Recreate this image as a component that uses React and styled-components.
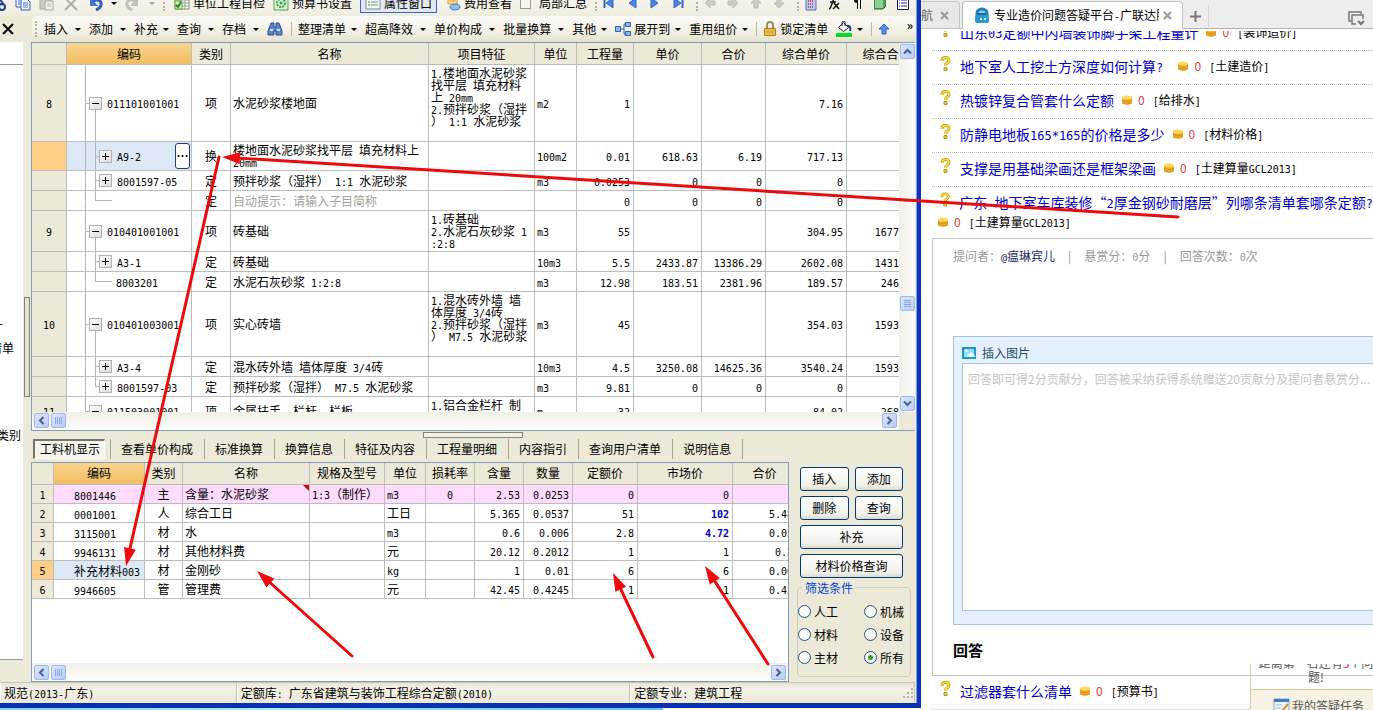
import React from "react";
import styled, { createGlobalStyle, css } from "styled-components";

const GlobalStyle = createGlobalStyle`
  * {
    box-sizing: border-box;
  }

  body {
    margin: 0;
    background: #fff;
    color: #000;
    font-family: "Noto Sans CJK SC", sans-serif;
    font-size: 12px;
    line-height: 12px;
    overflow: hidden;
  }

  button,
  input,
  textarea {
    font: inherit;
    color: inherit;
  }
`;

/* ---------- text ---------- */

const Latin = styled.span`
  font-family: "DejaVu Sans Mono", "Liberation Mono", monospace;
  font-size: ${(props) => props.$size}px;
  line-height: 0;
  white-space: pre;
`;

// half-width runs are set in a monospace face, half as wide as a CJK character
const Mixed = ({ text, size = 10 }) =>
  text.split(/([\x20-\x7e]+)/).map((part, i) =>
    i % 2 ? (
      <Latin key={i} $size={size}>
        {part}
      </Latin>
    ) : (
      part
    )
  );

/* ---------- page ---------- */

const Desktop = styled.div`
  position: relative;
  display: grid;
  grid-template-columns: minmax(0, 921fr) minmax(0, 452fr);
  height: 100vh;
  overflow: hidden;
`;

const LeftSide = styled.div`
  display: flex;
  flex-direction: column;
  min-height: 0;
`;

const TaskStrip = styled.div`
  flex: none;
  height: 2px;
  width: 72%;
  background: linear-gradient(90deg, #7fd4ee, #a6ecf8 40%, #5cc6ee);
`;

const AppWindow = styled.div`
  flex: 1;
  min-height: 0;
  display: flex;
  flex-direction: column;
  background: #ece9d8;
  border-right: 4px solid #0a35b8;
  border-bottom: 5px solid #0a31b4;
  box-shadow: inset -1px 0 0 #7fa3e8;
  padding-right: 2px;
`;

/* ---------- toolbars ---------- */

const TopBar = styled.div`
  flex: none;
  display: flex;
  align-items: flex-end;
  height: 16px;
  overflow: hidden;
  background: linear-gradient(#f6f4ea, #efecdf);
`;

const TopRow = styled.div`
  flex: none;
  display: flex;
  align-items: center;
  gap: 8px;
  height: 26px;
  white-space: nowrap;
`;

const TopGroups = styled.div`
  display: flex;
  gap: 12px;
`;

const IconGroup = styled.div`
  display: flex;
  align-items: center;
  gap: 11px;
  height: 16px;
  padding-left: 6px;
  border-left: 2px dotted #b5b19d;
`;

const Grip = styled.span`
  flex: none;
  width: 3px;
  height: 16px;
  border-left: 2px dotted #b5b19d;
`;

const BarGrip = styled(Grip)`
  margin-right: 6px;
`;

const TopButton = styled.button`
  display: flex;
  align-items: center;
  gap: 3px;
  padding: 0;
  border: 0;
  background: none;
  height: 20px;
  white-space: nowrap;

  ${(props) =>
    props.$active &&
    css`
      padding: 0 4px;
      border: 1px solid #316ac5;
      background: #e3e8f0;
    `}
`;

const CheckLabel = styled.label`
  display: flex;
  align-items: center;
  gap: 8px;

  input {
    appearance: none;
    width: 11px;
    height: 11px;
    margin: 0;
    border: 1px solid #9c9a8c;
    background: #f8f7f1;
  }
`;

const ToolRow = styled.div`
  flex: none;
  display: flex;
  height: 26px;
`;

const CloseSide = styled.button`
  flex: none;
  width: 32px;
  padding: 0 0 0 2px;
  border: 0;
  background: none;
  text-align: left;
`;

const ToolBar = styled.div`
  flex: 1;
  min-width: 0;
  display: flex;
  align-items: center;
  padding-left: 3px;
  background: linear-gradient(#fbfaf6, #f4f2e8 50%, #e6e2d0);
  border-radius: 4px 0 0 4px;
  overflow: hidden;
  white-space: nowrap;
`;

const ToolItem = styled.button`
  flex: none;
  display: flex;
  align-items: center;
  gap: ${(props) => (props.$tight ? 5 : 7)}px;
  padding: 0 8px 0 0;
  border: 0;
  background: none;
`;

const ToolLabel = styled.span`
  display: flex;
  align-items: center;
  gap: 3px;
`;

const Caret = styled.span`
  border: 3px solid transparent;
  border-bottom: 0;
  border-top-color: ${(props) => (props.$dim ? "#aaa" : "#000")};
`;

const ToolDivider = styled.span`
  flex: none;
  width: 1px;
  height: 14px;
  margin-right: 6px;
  background: #bdb9a6;
`;

const Chevron = styled.span`
  margin-left: auto;
  padding: 0 2px 8px 0;
  font-weight: bold;
`;

/* ---------- work area ---------- */

const Work = styled.div`
  flex: 1;
  min-height: 0;
  display: flex;
`;

const SideTree = styled.div`
  flex: none;
  width: 23px;
  display: flex;
  flex-direction: column;
  margin-bottom: 22px;
  background: #fff;
  border-bottom: 1px solid #9c9a8c;
  overflow: hidden;
`;

const SideHead = styled.div`
  height: 23px;
  border-bottom: 1px solid #9a9a94;
`;

const SideText = styled.div`
  display: flex;
  justify-content: flex-end;
  padding-right: ${(props) => props.$pad}px;
  margin-top: ${(props) => props.$top}px;
  white-space: nowrap;
`;

const SideSplit = styled.div`
  flex: none;
  width: 8px;
  display: flex;
  flex-direction: column;
  justify-content: center;
  align-items: center;
  padding-bottom: 30px;
`;

const SplitHandle = styled.div`
  width: 6px;
  height: 100px;
  border: 1px solid #86846f;
  background: #e4e1d0;
`;

const Panes = styled.div`
  flex: 1;
  min-width: 0;
  display: flex;
  flex-direction: column;
`;

const UpperPane = styled.div`
  flex: 388 1 0;
  min-height: 0;
  display: grid;
  grid-template-columns: minmax(0, 1fr) 16px;
  grid-template-rows: minmax(0, 1fr) 18px;
  border: 1px solid #7f9db9;
  border-right: 0;
  background: #fff;
`;

const LowerPane = styled.div`
  flex: 252 1 0;
  min-height: 0;
  display: flex;
  flex-direction: column;
`;

const TableClip = styled.div`
  overflow: hidden;
  min-height: 0;
`;

const Table = styled.table`
  table-layout: fixed;
  width: ${(props) => props.$width}px;
  border-collapse: separate;
  border-spacing: 0;
`;

const Th = styled.th`
  height: 22px;
  padding: 0;
  font-weight: normal;
  white-space: nowrap;
  overflow: hidden;
  background: ${(props) =>
    props.$hot ? "linear-gradient(#f9d48f, #f2bd62)" : "#ece9d8"};
  border-right: 1px solid #bdbdb4;
  border-bottom: 1px solid #bdbdb4;
`;

const Tr = styled.tr`
  height: ${(props) => props.$h}px;
  background: ${(props) => (props.$pink ? "#ffdcff" : "#fff")};
`;

const Td = styled.td`
  padding: 0 2px;
  overflow: hidden;
  white-space: nowrap;
  text-align: ${(props) => props.$align || "left"};
  vertical-align: ${(props) => (props.$top ? "top" : "middle")};
  border-right: 1px solid #bdbdbd;
  border-bottom: 1px solid #bdbdbd;
  ${(props) => props.$top && "padding-top: 2px;"}
  ${(props) => props.$align === "right" && "padding-right: 3px;"}
  ${(props) => props.$hint && "color: #a5a293;"}
  ${(props) => props.$strong && "color: #0000d0; font-weight: bold;"}
`;

const NoCell = styled(Td)`
  text-align: center;
  background: ${(props) => (props.$hot ? "#ffcf87" : "#ece9d8")};
`;

const CodeCell = styled(Td)`
  padding: ${(props) => (props.$plain ? "2px 0 0 20px" : "0")};
  ${(props) => props.$picked && "background: #dce8f5;"}
`;

const NameBox = styled.div`
  display: flex;
  justify-content: space-between;
`;

const NoteMark = styled.i`
  align-self: flex-start;
  margin: -3px -2px 0 0;
  border: 3px solid #e00000;
  border-left-color: transparent;
  border-bottom-color: transparent;
`;

/* tree column */

const TreeRow = styled.div`
  display: flex;
  align-items: center;
  height: ${(props) => props.$h - 1}px;
  padding-left: 18px;
`;

const Branch = styled.span`
  flex: none;
  align-self: stretch;
  width: ${(props) => props.$w}px;
  display: flex;
  flex-direction: column;
  ${(props) => props.$leaf && "margin-right: 4px;"}

  &::before,
  &::after {
    content: "";
    flex: 1;
    border-left: 1px solid #b4b4b4;
  }

  &::before {
    border-bottom: 1px solid ${(props) => (props.$arm ? "#b4b4b4" : "transparent")};
  }

  &::after {
    border-left-color: ${(props) => (props.$last ? "transparent" : "#b4b4b4")};
  }
`;

const ToggleCol = styled.span`
  flex: none;
  align-self: stretch;
  display: flex;
  flex-direction: column;
  align-items: center;
  width: 13px;
  margin-right: 5px;

  &::before,
  &::after {
    content: "";
    flex: 1;
  }

  &::after {
    border-left: 1px solid ${(props) => (props.$open ? "#b4b4b4" : "transparent")};
  }
`;

const Toggle = styled.button`
  width: 13px;
  height: 13px;
  padding: 0;
  display: flex;
  border: 1px solid #b0b0b0;
  background: linear-gradient(135deg, #fff, #dcdcdc);
`;

const MoreButton = styled.button`
  width: 15px;
  height: 26px;
  margin: 0 1px 0 auto;
  padding: 0;
  border: 1px solid #1d3f70;
  border-radius: 3px;
  background: #fdfdfb;
  font-weight: bold;
`;

/* scrollbars */

const Bar = styled.div`
  display: flex;
  flex-direction: ${(props) => (props.$vertical ? "column" : "row")};
  align-items: center;
  justify-content: space-between;
  padding: ${(props) => (props.$vertical ? "1px 0" : "0 2px")};
  background: linear-gradient(
    ${(props) => (props.$vertical ? "90deg" : "180deg")},
    #f1efe8,
    #fefefb
  );
`;

const BarStart = styled.div`
  display: flex;
  gap: 2px;
`;

const Track = styled.div`
  flex: 1;
  display: flex;
  flex-direction: column;

  &::before {
    content: "";
    flex: 236;
  }

  &::after {
    content: "";
    flex: 85;
  }
`;

const BarButton = styled.button`
  flex: none;
  display: flex;
  align-items: center;
  justify-content: center;
  width: 15px;
  height: 15px;
  padding: 0;
  border: 1px solid #9fb8ea;
  border-radius: 2px;
  background: linear-gradient(135deg, #dbe6fd, #b7cdf9);
`;

const Corner = styled.div`
  background: #ece9d8;
`;

/* ---------- lower pane ---------- */

const HandleRow = styled.div`
  flex: none;
  display: flex;
  justify-content: center;
  height: 7px;
  padding-top: 1px;
`;

const FlatHandle = styled.div`
  width: 100px;
  height: 6px;
  border: 1px solid #86846f;
  background: #f2f0e6;
`;

const Tabs = styled.div`
  flex: none;
  display: flex;
  align-items: center;
  height: 24px;
  padding: 0 0 2px 2px;
`;

const Tab = styled.button`
  height: 20px;
  padding: 0 11px 0 10px;
  border: 0;
  border-right: 1px solid #a9a695;
  background: none;
  white-space: nowrap;

  ${(props) =>
    props.$active &&
    css`
      padding: 0 4px 0 5px;
      margin-right: 5px;
      border: 1px solid #fff;
      border-top: 2px solid #77756a;
      border-left: 2px solid #77756a;
      background: #f6f4ec;
    `}
`;

const TabEdge = styled.span`
  width: 1px;
  height: 20px;
  background: #a9a695;
`;

const LowerRow = styled.div`
  flex: 1;
  min-height: 0;
  display: flex;
`;

const DetailGrid = styled.div`
  flex: 1;
  min-width: 0;
  display: flex;
  flex-direction: column;
  justify-content: space-between;
  border: 1px solid #7f9db9;
  background: #fff;
  overflow: hidden;
`;

const DetailBar = styled(Bar)`
  flex: none;
  height: 18px;
`;

const Actions = styled.div`
  flex: none;
  width: 126px;
  display: flex;
  flex-direction: column;
  padding: 5px 4px 5px 8px;
`;

const ButtonGrid = styled.div`
  display: grid;
  grid-template-columns: 1fr 1fr;
  gap: 5px 6px;
  padding: 0 8px 0 3px;
`;

const XpButton = styled.button`
  height: 24px;
  padding: 0;
  border: 1px solid #003c74;
  border-radius: 3px;
  background: linear-gradient(#fff, #f0f0ea 80%, #dcd8cc);
  ${(props) => props.$wide && "grid-column: span 2;"}
`;

const Filter = styled.fieldset`
  flex: 1;
  display: grid;
  grid-template-columns: 1fr 46px;
  align-content: center;
  margin: 4px 0 0;
  padding: 0;
  border: 1px solid #d0cfbf;
  border-radius: 4px;

  legend {
    margin-left: 4px;
    padding: 0 3px;
    color: #0046d5;
  }
`;

const Radio = styled.label`
  display: flex;
  align-items: center;
  gap: 3px;
  height: 23px;

  input {
    appearance: none;
    width: 13px;
    height: 13px;
    margin: 0;
    border: 1px solid #1d5281;
    border-radius: 50%;
    background: #fbfbf8;
  }

  input:checked {
    background: radial-gradient(circle, #2aa32a 2px, #fbfbf8 3px);
  }
`;

const StatusBar = styled.div`
  flex: none;
  display: grid;
  grid-template-columns: 237fr 394fr 285fr;
  height: 21px;
  border-top: 1px solid #c9c6b6;
  background: linear-gradient(#e8e5d6, #f3f1e8 30%, #ece9d8);
`;

const StatusItem = styled.div`
  display: flex;
  align-items: center;
  justify-content: space-between;
  padding-left: 3px;
  overflow: hidden;
  white-space: nowrap;
  border-left: 1px solid #fff;
  border-right: 1px solid #c3c0af;
`;

/* ---------- browser ---------- */

const Browser = styled.div`
  position: relative;
  display: flex;
  flex-direction: column;
  min-height: 0;
  background: #fff;
  overflow: hidden;
`;

const BrowserTabs = styled.div`
  flex: none;
  display: flex;
  align-items: flex-end;
  height: 29px;
  background: #ededed;
  box-shadow: inset 0 -1px 0 #b4b4b4;
  white-space: nowrap;
`;

const BrowserTab = styled.div`
  display: flex;
  align-items: center;
  justify-content: space-between;
  width: 39px;
  height: 28px;
  padding-right: 10px;
  border: 1px solid #c4c4c4;
  border-left: 0;
  border-radius: 0 4px 0 0;
  background: #e8e8e8;
  color: #666;
  overflow: hidden;

  ${(props) =>
    props.$active &&
    css`
      gap: 4px;
      width: 221px;
      margin-left: 2px;
      padding: 0 10px 0 11px;
      border-left: 1px solid #b4b4b4;
      border-bottom-color: #fff;
      border-radius: 4px 4px 0 0;
      background: #fff;
      color: #000;
    `}
`;

const TabTitle = styled.span`
  flex: 1;
  overflow: hidden;
`;

const PlainButton = styled.button`
  display: flex;
  padding: 0;
  border: 0;
  background: none;
`;

const NewTab = styled.div`
  display: flex;
  align-items: center;
  width: 26px;
  height: 22px;
  padding-left: 7px;
  margin-bottom: 2px;
  border-right: 1px solid #d6d6d6;
`;

const TabsMenu = styled.div`
  margin-left: auto;
  padding: 0 8px 2px 0;
`;

const Page = styled.div`
  flex: 1;
  min-height: 0;
  display: flex;
  flex-direction: column;
  padding-left: 11px;
`;

const ScrolledRow = styled.div`
  flex: none;
  display: flex;
  flex-direction: column;
  justify-content: flex-end;
  height: 20px;
  margin-top: 2px;
  overflow: hidden;
`;

const Question = styled.div`
  flex: none;
  display: flex;
  gap: 9px;
  height: ${(props) => (props.$open ? "auto" : "34px")};
  padding: 5px 0 0 8px;
  white-space: nowrap;
  ${(props) => !props.$open && "border-bottom: 1px dotted #b8b8b8;"}
`;

const QuestionLine = styled.div`
  display: flex;
  align-items: center;
  gap: 8px;
  height: 20px;
`;

const QuestionLink = styled.a`
  font-size: 14px;
  color: #0000cc;
  text-decoration: none;
`;

const Score = styled.span`
  display: flex;
  align-items: center;
  gap: 6px;
  color: #e04040;
`;

const ScoreRow = styled(QuestionLine)`
  flex: none;
  height: 26px;
  padding: 0 0 6px 6px;
  white-space: nowrap;
`;

const Card = styled.div`
  flex: 1;
  min-height: 0;
  display: flex;
  flex-direction: column;
  border: 1px solid #c3c6c8;
  border-right: 0;
  padding-left: 20px;
`;

const Meta = styled.div`
  display: flex;
  gap: 13px;
  margin: 11px 0 74px;
  color: #999;
  white-space: nowrap;

  a {
    color: #1e2a6b;
    text-decoration: none;
  }
`;

const Composer = styled.div`
  flex: 1;
  min-height: 0;
  display: flex;
  flex-direction: column;
  padding: 0 0 13px 8px;
  border: 1px solid #a9c4dd;
  border-right: 0;
  background: #e4f1fd;
`;

const InsertImage = styled.button`
  flex: none;
  display: flex;
  align-items: center;
  gap: 6px;
  height: 26px;
  padding: 6px 0 0;
  border: 0;
  background: none;
  color: #24495f;
`;

const Answer = styled.textarea`
  flex: 1;
  resize: none;
  padding: 9px 0 0 5px;
  border: 1px solid #a9c4dd;
  border-right: 0;
  background: #fff;
  outline: 0;
  white-space: nowrap;
  overflow: hidden;

  &::placeholder {
    color: #c4c4c4;
  }
`;

const CardTitle = styled.h2`
  flex: none;
  margin: 0;
  font-size: 15px;
  line-height: 50px;
`;

const Notice = styled.aside`
  position: absolute;
  right: 0;
  bottom: 0;
  width: 123px;
  height: 46px;
  overflow: hidden;
  display: flex;
  flex-direction: column;
  justify-content: flex-start;
  border-left: 1px solid #d8cda8;
  color: #555;
`;

const NoticeText = styled.div`
  flex: none;
  display: flex;
  flex-direction: column;
  justify-content: flex-end;
  align-items: center;
  height: 25px;
  padding: 0 0 5px 8px;
  line-height: 14px;
  white-space: nowrap;

  b {
    font-weight: normal;
    color: #e03030;
  }
`;

const NoticeTask = styled.div`
  flex: none;
  display: flex;
  align-items: flex-start;
  gap: 2px;
  height: 30px;
  padding: 8px 0 0 22px;
  border-top: 1px solid #d8c890;
  background: #f7f2e4;
  line-height: 16px;
  white-space: nowrap;
`;

const ArrowLayer = styled.svg`
  position: absolute;
  inset: 0;
  width: 100%;
  height: 100%;
  pointer-events: none;
`;

/* ---------- icons ---------- */

const Svg = ({ w = 16, h = 16, children }) => (
  <svg width={w} height={h} viewBox={`0 0 ${w} ${h}`} fill="none">
    {children}
  </svg>
);

const CutIcon = () => (
  <Svg w={7}>
    <circle cx="2" cy="12" r="3" stroke="#1f3f8f" strokeWidth="2" />
    <path d="M0 4l3 5" stroke="#1f3f8f" strokeWidth="2" />
  </Svg>
);

const CopyIcon = () => (
  <Svg>
    <path d="M1 1h8v11H1z" fill="#e8f1ff" stroke="#3c6cc4" />
    <path d="M6 4h6l3 3v8H6z" fill="#f4f8ff" stroke="#2c5cb8" />
    <path d="M8 8h5M8 10h5M8 12h5M3 5h2M3 7h2M3 9h2" stroke="#4c7cd0" />
  </Svg>
);

const PasteIcon = () => (
  <Svg>
    <path d="M1 2h11v12H1z" fill="#cfccbf" stroke="#aaa796" />
    <path d="M6 6h8v9H6z" fill="#f2f1ea" stroke="#aaa796" />
    <path d="M8 9h4M8 11h4" stroke="#bbb" />
  </Svg>
);

const DeleteIcon = () => (
  <Svg>
    <path d="M2 3l12 12M14 3L2 15" stroke="#b1aea2" strokeWidth="2" />
  </Svg>
);

const TurnIcon = ({ redo }) => (
  <Svg>
    <g transform={redo ? "translate(16 0) scale(-1 1)" : undefined}>
      <path d="M6 7c4-4 9-1 8 3-.5 3-3 4-5 5" stroke={redo ? "#c4c1b6" : "#2f62c8"} strokeWidth="3" />
      <path d="M3 2v9h8z" fill={redo ? "#c4c1b6" : "#3f74da"} />
    </g>
  </Svg>
);

const CheckSheetIcon = () => (
  <Svg>
    <path d="M1 1h14v13H1z" fill="#fff" stroke="#7c8c7c" />
    <path d="M1 5h14M1 8h14M1 11h14M6 1v13M11 1v13" stroke="#8ea08e" />
    <path d="M1 6h7v8H1z" fill="#d8f0b8" stroke="#6a9a3a" />
    <path d="M2 10l2 2 3-5" stroke="#1c8a1c" strokeWidth="2" />
  </Svg>
);

const GearSheetIcon = () => (
  <Svg>
    <path d="M1 1h14v14H1z" fill="#d8f2d0" stroke="#5aa05a" />
    <circle cx="8" cy="8" r="4" stroke="#3f9a50" strokeWidth="2" strokeDasharray="2 1" />
    <circle cx="8" cy="8" r="1.5" fill="#3f9a50" />
  </Svg>
);

const ListIcon = () => (
  <Svg>
    <path d="M1 1h14v13H1z" fill="#f4fbf4" stroke="#6f8f8f" />
    <path d="M3 4h2M3 7h2M3 10h2" stroke="#2f9a3f" />
    <path d="M6 4h7M6 7h7M6 10h7" stroke="#7a8a9a" />
  </Svg>
);

const CostIcon = () => (
  <Svg>
    <path d="M3 0h9v9H3z" fill="#fce6a8" stroke="#d99a30" />
    <path d="M4 3h7M4 6h7" stroke="#d99a30" />
    <ellipse cx="10" cy="12" rx="5" ry="3" fill="#8fc0f0" stroke="#3c74c0" />
  </Svg>
);

const NavIcon = ({ back, stop }) => (
  <Svg w={12}>
    <g transform={back ? "translate(12 0) scale(-1 1)" : undefined}>
      <path d="M2 3l7 5-7 5z" fill="#4a86e0" stroke="#2f66c8" />
      {stop && <path d="M10.500 3v10" stroke="#2f66c8" strokeWidth="2" />}
    </g>
  </Svg>
);

const MoveIcon = ({ turn }) => (
  <Svg w={12}>
    <path
      transform={`rotate(${turn} 6 8)`}
      d="M1 8l5-5v3h5v4H6v3z"
      fill="#cfccc2"
      stroke="#bdbab0"
    />
  </Svg>
);

const CalcIcon = () => (
  <Svg w={12}>
    <path d="M1 1h10v14H1z" fill="#b9cdf0" stroke="#5070b0" />
    <path d="M3 6h6M3 9h6M3 12h6" stroke="#d04060" strokeWidth="2" strokeDasharray="1 1" />
  </Svg>
);

const FxIcon = () => (
  <Svg w={12}>
    <path d="M1 14c3 0 3-11 7-12M2 7h6M6 8l5 6M11 8l-6 6" stroke="#111" strokeWidth="1.500" />
  </Svg>
);

const PilcrowIcon = () => (
  <Svg w={12}>
    <path d="M6 2h5M6.500 2v12M9.500 2v12" stroke="#111" />
    <path d="M6 2a3 3 0 0 0 0 6z" fill="#111" />
  </Svg>
);

const CubeIcon = () => (
  <Svg w={12}>
    <path d="M0 4l3-3h9v10l-3 3H0z" fill="#4fa05a" stroke="#2c6c38" />
    <path d="M1 5h8v8H1z" fill="#8ed094" />
  </Svg>
);

const LinesIcon = () => (
  <Svg w={12}>
    <path d="M.500 1.500h11v13H.500z" fill="#fff" stroke="#111a60" />
    <path d="M2 5h1M4 5h6M2 8h1M4 8h6M2 11h1M4 11h6" stroke="#1a2aa0" />
  </Svg>
);

const BinocularsIcon = () => (
  <Svg>
    <path d="M4 2h3v4h2V2h3l3 8v4H9v-4H7v4H1v-4z" fill="#5b86c8" stroke="#27508f" />
    <path d="M3 9h3M10 9h3" stroke="#d4e4fb" strokeWidth="2" />
  </Svg>
);

const ExpandIcon = () => (
  <Svg>
    <path d="M5 8h4M9 3v10M9 3h2M9 13h2" stroke="#2f5fb0" />
    <path d="M.500 5.500h5v5h-5zM10.500 1.500h5v4h-5zM10.500 10.500h5v4h-5z" fill="#8fb8ef" stroke="#2f5fb0" />
  </Svg>
);

const LockIcon = () => (
  <Svg w={14}>
    <path d="M4 7V4a3 3 0 0 1 6 0v3" stroke="#9a8a60" strokeWidth="2" />
    <path d="M1.500 7.500h11v7h-11z" fill="#f0c050" stroke="#b07c18" />
    <path d="M3 10h8M3 12h8" stroke="#d49c30" />
  </Svg>
);

const BucketIcon = () => (
  <Svg>
    <path d="M2.500 6.500l5-5 5 5-5 4z" fill="#f4f4f4" stroke="#111a30" />
    <path d="M6 5V1.500a1.500 1.500 0 0 1 3 0V5" stroke="#111a30" />
    <path d="M11 5c3-1 4 2 3 5" stroke="#1c3c90" strokeWidth="2" />
    <path d="M0 12h16v4H0z" fill="#00e020" />
  </Svg>
);

const UpIcon = () => (
  <Svg w={12}>
    <path d="M6 3l5 5H8v5H4V8H1z" fill="#5b8ee4" stroke="#2f62c0" />
  </Svg>
);

const CrossIcon = ({ size = 9, color = "#999" }) => (
  <Svg w={size} h={size}>
    <path d={`M1 1L${size - 1} ${size - 1}M${size - 1} 1L1 ${size - 1}`} stroke={color} strokeWidth="2" />
  </Svg>
);

const ChevronIcon = ({ turn = 0 }) => (
  <Svg w={9} h={9}>
    <path transform={`rotate(${turn} 4.500 4.500)`} d="M1 6.500l3.500-3.500L8 6.500" stroke="#4d6185" strokeWidth="2" />
  </Svg>
);

const ThumbIcon = ({ turn = 0 }) => (
  <Svg w={9} h={9}>
    <path transform={`rotate(${turn} 4.500 4.500)`} d="M1.500 1v7M3.500 1v7M5.500 1v7M7.500 1v7" stroke="#8aa8e8" />
  </Svg>
);

const ToggleIcon = ({ plus }) => (
  <Svg w={11} h={11}>
    <path d={plus ? "M2 5.500h7M5.500 2v7" : "M2 5.500h7"} stroke="#000" />
  </Svg>
);

const QuestionIcon = () => (
  <Svg w={11} h={15}>
    <path d="M2 5c0-4.500 7-4.500 7-.500 0 2.500-3.500 2.500-3.500 5" stroke="#b8981a" strokeWidth="3" />
    <path d="M2 5c0-4.500 7-4.500 7-.500 0 2.500-3.500 2.500-3.500 4.500" stroke="#fae030" strokeWidth="1.600" />
    <path d="M4 11.500h3v3H4z" fill="#f4c820" stroke="#b8981a" />
  </Svg>
);

const CoinIcon = () => (
  <Svg w={10} h={10}>
    <path d="M0 2.500v5C0 10 10 10 10 7.500v-5z" fill="#f2a818" />
    <ellipse cx="5" cy="2.500" rx="5" ry="2" fill="#fbdc60" />
    <path d="M0 5c1 2 9 2 10 0M0 7.500c1 2 9 2 10 0" stroke="#d89020" />
  </Svg>
);

const SiteIcon = () => (
  <Svg>
    <path d="M3 9V6a5 4 0 0 1 10 0v3" fill="#8fd0ec" stroke="#2480b8" strokeWidth="3" />
    <rect x="1" y="8" width="14" height="8" rx="2" fill="#2a9ad0" />
    <path d="M4 6h8v2H4z" fill="#1c6aa0" />
    <path d="M6 12h2M10 12h2" stroke="#c8ecfa" strokeWidth="2" />
  </Svg>
);

const PlusIcon = () => (
  <Svg w={11} h={11}>
    <path d="M5.500 0v11M0 5.500h11" stroke="#777" strokeWidth="2" />
  </Svg>
);

const TabsMenuIcon = () => (
  <Svg w={17} h={15}>
    <path d="M3 10H1V1h12v2M8 13H4V4h11v4" stroke="#777" strokeWidth="1.500" />
    <path d="M10 10l3 3 3-3" stroke="#777" strokeWidth="2" />
  </Svg>
);

const PictureIcon = () => (
  <Svg w={14} h={12}>
    <path d="M1 1h12v10H1z" fill="#8fe0f8" stroke="#1a98c8" strokeWidth="2" />
    <path d="M3 4h3M6 9l3-3 3 3z" stroke="#fff" strokeWidth="1.500" />
  </Svg>
);

const NoteIcon = () => (
  <Svg w={17} h={16}>
    <path d="M1 1h15v14H1z" fill="#eef5fc" stroke="#90a8c0" />
    <path d="M1 1h15v3H1z" fill="#3c7cc8" />
    <path d="M3 7h6M3 10h5" stroke="#a0b4c8" />
    <path d="M15 6l-6 7" stroke="#e09030" strokeWidth="2" />
  </Svg>
);

const GripIcon = () => (
  <Svg w={12} h={12}>
    <path
      d="M9 1h2v2H9zM5 5h2v2H5zM9 5h2v2H9zM1 9h2v2H1zM5 9h2v2H5zM9 9h2v2H9z"
      fill="#b8b4a2"
    />
  </Svg>
);

/* ---------- data ---------- */

const tools = [
  { label: "插入" },
  { label: "添加" },
  { label: "补充", tight: true },
  { label: "查询" },
  { label: "存档" },
];

const moreTools = [
  { label: "整理清单", tight: true },
  { label: "超高降效" },
  { label: "单价构成" },
  { label: "批量换算" },
  { label: "其他", tight: true },
  { label: "展开到", tight: true, icon: <ExpandIcon /> },
  { label: "重用组价", tight: true },
];

const mainWidths = [35, 125, 39, 198, 106, 42, 57, 68, 64, 81, 80];
const mainHeads = ["", "编码", "类别", "名称", "项目特征", "单位", "工程量", "单价", "合价", "综合单价", "综合合价"];

// level 0 is a list item, level 1 a quota below it
const mainRows = [
  {
    no: "8", h: 77, level: 0, code: "011101001001", kind: "项", name: ["水泥砂浆楼地面"],
    note: ["1.楼地面水泥砂浆", "找平层 填充材料", "上 20mm", "2.预拌砂浆（湿拌", "） 1:1 水泥砂浆"],
    unit: "m2", nums: ["1", "", "", "7.16", ""],
  },
  {
    h: 29, level: 1, code: "A9-2", kind: "换", name: ["楼地面水泥砂浆找平层 填充材料上", "20mm"],
    unit: "100m2", nums: ["0.01", "618.63", "6.19", "717.13", ""], picked: true,
  },
  { h: 20, level: 1, code: "8001597-05", kind: "定", name: ["预拌砂浆（湿拌） 1:1 水泥砂浆"], unit: "m3", nums: ["0.0253", "0", "0", "0", ""] },
  { h: 20, level: 1, leaf: true, last: true, code: "", kind: "定", name: ["自动提示：请输入子目简称"], hint: true, unit: "", nums: ["0", "0", "0", "0", ""] },
  {
    no: "9", h: 41, level: 0, code: "010401001001", kind: "项", name: ["砖基础"],
    note: ["1.砖基础", "2.水泥石灰砂浆 1", ":2:8"],
    unit: "m3", nums: ["55", "", "", "304.95", "16772.25"],
  },
  { h: 20, level: 1, code: "A3-1", kind: "定", name: ["砖基础"], unit: "10m3", nums: ["5.5", "2433.87", "13386.29", "2602.08", "14311.44"] },
  { h: 20, level: 1, leaf: true, last: true, code: "8003201", kind: "定", name: ["水泥石灰砂浆 1:2:8"], unit: "m3", nums: ["12.98", "183.51", "2381.96", "189.57", "2460.62"] },
  {
    no: "10", h: 65, level: 0, code: "010401003001", kind: "项", name: ["实心砖墙"],
    note: ["1.混水砖外墙 墙", "体厚度 3/4砖", "2.预拌砂浆（湿拌", "） M7.5 水泥砂浆"],
    unit: "m3", nums: ["45", "", "", "354.03", "15931.35"],
  },
  { h: 20, level: 1, code: "A3-4", kind: "定", name: ["混水砖外墙 墙体厚度 3/4砖"], unit: "10m3", nums: ["4.5", "3250.08", "14625.36", "3540.24", "15931.08"] },
  { h: 20, level: 1, last: true, code: "8001597-03", kind: "定", name: ["预拌砂浆（湿拌） M7.5 水泥砂浆"], unit: "m3", nums: ["9.81", "0", "0", "0", ""] },
  {
    no: "11", h: 29, level: 0, code: "011503001001", kind: "项", name: ["金属扶手、栏杆、栏板"],
    note: ["1.铝合金栏杆 制"], unit: "m", nums: ["32", "", "", "84.02", "2688.64"],
  },
];

const tabs = ["查看单价构成", "标准换算", "换算信息", "特征及内容", "工程量明细", "内容指引", "查询用户清单", "说明信息"];

const detailWidths = [22, 91, 38, 127, 75, 41, 49, 49, 49, 65, 95, 64];
const detailHeads = ["", "编码", "类别", "名称", "规格及型号", "单位", "损耗率", "含量", "数量", "定额价", "市场价", "合价"];

const detailRows = [
  { code: "8001446", kind: "主", name: "含量：水泥砂浆", spec: "1:3（制作）", unit: "m3", loss: "0", nums: ["2.53", "0.0253", "0", "0", ""], pink: true, mark: true },
  { code: "0001001", kind: "人", name: "综合工日", unit: "工日", nums: ["5.365", "0.0537", "51", "102", "5.48"], strong: true },
  { code: "3115001", kind: "材", name: "水", unit: "m3", nums: ["0.6", "0.006", "2.8", "4.72", "0.03"], strong: true },
  { code: "9946131", kind: "材", name: "其他材料费", unit: "元", nums: ["20.12", "0.2012", "1", "1", "0.2"] },
  { code: "补充材料003", kind: "材", name: "金刚砂", unit: "kg", nums: ["1", "0.01", "6", "6", "0.06"], picked: true },
  { code: "9946605", kind: "管", name: "管理费", unit: "元", nums: ["42.45", "0.4245", "1", "1", "0.42"] },
];

const filters = ["人工", "机械", "材料", "设备", "主材", "所有"];

const questions = [
  { title: "地下室人工挖土方深度如何计算? ", tag: "土建造价" },
  { title: "热镀锌复合管套什么定额", tag: "给排水" },
  { title: "防静电地板165*165的价格是多少", tag: "材料价格" },
  { title: "支撑是用基础梁画还是框架梁画", tag: "土建算量GCL2013" },
];

const arrows = [
  [1178, 217, 222, 157],
  [219, 157, 126, 566],
  [352, 656, 257, 571],
  [653, 657, 613, 573],
  [768, 664, 705, 566],
];

const sum = (list) => list.reduce((a, b) => a + b, 0);

/* ---------- parts ---------- */

const Lines = ({ lines }) =>
  lines.map((line, i) => (
    <React.Fragment key={i}>
      {i > 0 && <br />}
      <Mixed text={line} />
    </React.Fragment>
  ));

const TreeCode = ({ row }) => (
  <TreeRow $h={row.h}>
    <Branch $w={row.level ? 10 : 4} $arm={!row.level} />
    {row.level > 0 && (
      <Branch $w={row.leaf ? 17 : 4} $arm $leaf={row.leaf} $last={row.last} />
    )}
    {!row.leaf && (
      <ToggleCol $open={!row.level}>
        <Toggle type="button">
          <ToggleIcon plus={row.level > 0} />
        </Toggle>
      </ToggleCol>
    )}
    <span>
      <Mixed text={row.code} />
    </span>
    {row.picked && <MoreButton type="button">…</MoreButton>}
  </TreeRow>
);

const MainTable = () => (
  <Table $width={sum(mainWidths)}>
    <colgroup>
      {mainWidths.map((w, i) => (
        <col key={i} width={w} />
      ))}
    </colgroup>
    <thead>
      <tr>
        {mainHeads.map((head, i) => (
          <Th key={i} $hot={i === 1}>
            {head}
          </Th>
        ))}
      </tr>
    </thead>
    <tbody>
      {mainRows.map((row, i) => (
        <Tr key={i} $h={row.h}>
          <NoCell $hot={row.picked}>
            <Mixed text={row.no || ""} />
          </NoCell>
          <CodeCell $picked={row.picked}>
            <TreeCode row={row} />
          </CodeCell>
          <Td $align="center">{row.kind}</Td>
          <Td $hint={row.hint}>
            <Lines lines={row.name} />
          </Td>
          <Td $top>
            <Lines lines={row.note || []} />
          </Td>
          <Td>
            <Mixed text={row.unit} />
          </Td>
          {row.nums.map((num, n) => (
            <Td key={n} $align="right">
              <Mixed text={num} />
            </Td>
          ))}
        </Tr>
      ))}
    </tbody>
  </Table>
);

const DetailTable = () => (
  <Table $width={sum(detailWidths)}>
    <colgroup>
      {detailWidths.map((w, i) => (
        <col key={i} width={w} />
      ))}
    </colgroup>
    <thead>
      <tr>
        {detailHeads.map((head, i) => (
          <Th key={i} $hot={i === 1}>
            {head}
          </Th>
        ))}
      </tr>
    </thead>
    <tbody>
      {detailRows.map((row, i) => (
        <Tr key={row.code} $h={19} $pink={row.pink}>
          <NoCell $hot={row.picked}>
            <Mixed text={String(i + 1)} />
          </NoCell>
          <CodeCell $plain $picked={row.picked}>
            <Mixed text={row.code} />
          </CodeCell>
          <Td $align="center">{row.kind}</Td>
          <Td>
            <NameBox>
              <span>{row.name}</span>
              {row.mark && <NoteMark />}
            </NameBox>
          </Td>
          <Td>
            <Mixed text={row.spec || ""} />
          </Td>
          <Td>
            <Mixed text={row.unit} />
          </Td>
          <Td $align="center">
            <Mixed text={row.loss || ""} />
          </Td>
          {row.nums.map((num, n) => (
            <Td key={n} $align="right" $strong={row.strong && n === 3}>
              <Mixed text={num} />
            </Td>
          ))}
        </Tr>
      ))}
    </tbody>
  </Table>
);

const HorizontalBar = ({ as: Wrap = Bar }) => (
  <Wrap>
    <BarStart>
      <BarButton type="button">
        <ChevronIcon turn={-90} />
      </BarButton>
      <BarButton type="button">
        <ThumbIcon />
      </BarButton>
    </BarStart>
    <BarButton type="button">
      <ChevronIcon turn={90} />
    </BarButton>
  </Wrap>
);

const MenuTool = ({ tool }) => (
  <ToolItem type="button" $tight={tool.tight}>
    <ToolLabel>
      {tool.icon}
      {tool.label}
    </ToolLabel>
    <Caret />
  </ToolItem>
);

const TopTools = () => (
  <TopBar>
    <TopRow>
      <CutIcon />
      <CopyIcon />
      <PasteIcon />
      <DeleteIcon />
      <TurnIcon />
      <Caret />
      <TurnIcon redo />
      <Caret $dim />
      <Grip />
      <TopButton type="button">
        <CheckSheetIcon />
        单位工程自检
      </TopButton>
      <TopButton type="button">
        <GearSheetIcon />
        预算书设置
      </TopButton>
      <TopButton type="button" $active>
        <ListIcon />
        属性窗口
      </TopButton>
      <TopButton type="button">
        <CostIcon />
        费用查看
      </TopButton>
      <CheckLabel>
        <input type="checkbox" />
        局部汇总
      </CheckLabel>
      <TopGroups>
        <IconGroup>
          <NavIcon back stop />
          <NavIcon back />
          <NavIcon />
          <NavIcon stop />
        </IconGroup>
        <IconGroup>
          <MoveIcon turn={0} />
          <MoveIcon turn={180} />
          <MoveIcon turn={90} />
          <MoveIcon turn={270} />
        </IconGroup>
        <IconGroup>
          <CalcIcon />
          <FxIcon />
          <PilcrowIcon />
          <CubeIcon />
          <LinesIcon />
        </IconGroup>
      </TopGroups>
    </TopRow>
  </TopBar>
);

const EditTools = () => (
  <ToolRow>
    <CloseSide type="button" aria-label="关闭">
      <CrossIcon size={12} color="#000" />
    </CloseSide>
    <ToolBar>
      <BarGrip />
      {tools.map((tool) => (
        <MenuTool key={tool.label} tool={tool} />
      ))}
      <ToolItem type="button" aria-label="查找">
        <BinocularsIcon />
      </ToolItem>
      <ToolDivider />
      {moreTools.map((tool) => (
        <MenuTool key={tool.label} tool={tool} />
      ))}
      <ToolDivider />
      <ToolItem type="button">
        <ToolLabel>
          <LockIcon />
          锁定清单
        </ToolLabel>
      </ToolItem>
      <ToolItem type="button" $tight>
        <BucketIcon />
        <Caret />
      </ToolItem>
      <ToolDivider />
      <UpIcon />
      <Chevron>»</Chevron>
    </ToolBar>
  </ToolRow>
);

const ScoreTag = ({ tag }) => (
  <>
    <Score>
      <CoinIcon />0
    </Score>
    <span>
      <Mixed text={`[${tag}]`} />
    </span>
  </>
);

const QuestionItem = ({ question }) => (
  <Question>
    <QuestionIcon />
    <QuestionLine>
      <QuestionLink href="#">
        <Mixed text={question.title} size={12} />
      </QuestionLink>
      <ScoreTag tag={question.tag} />
    </QuestionLine>
  </Question>
);

const Arrow = ({ points }) => {
  const [x1, y1, x2, y2] = points;
  const length = Math.hypot(x2 - x1, y2 - y1);
  const ux = (x2 - x1) / length;
  const uy = (y2 - y1) / length;
  const bx = x2 - ux * 18;
  const by = y2 - uy * 18;
  const head = [
    [x2, y2],
    [bx - uy * 6, by + ux * 6],
    [bx + uy * 6, by - ux * 6],
  ];

  return (
    <g>
      <line x1={x1} y1={y1} x2={bx} y2={by} stroke="#ee0a0a" strokeWidth="3" strokeLinecap="round" />
      <polygon points={head.map((p) => p.join(",")).join(" ")} fill="#ee0a0a" />
    </g>
  );
};

const App = () => {
  return (
    <>
      <GlobalStyle />
      <Desktop>
        <LeftSide>
          <AppWindow>
            <TopTools />
            <EditTools />
            <Work>
              <SideTree>
                <SideHead />
                <SideText $top={252} $pad={20}>-</SideText>
                <SideText $top={13} $pad={9}>清单</SideText>
                <SideText $top={75} $pad={2}>字类别</SideText>
              </SideTree>
              <SideSplit>
                <SplitHandle />
              </SideSplit>
              <Panes>
                <UpperPane>
                  <TableClip>
                    <MainTable />
                  </TableClip>
                  <Bar $vertical>
                    <BarButton type="button">
                      <ChevronIcon />
                    </BarButton>
                    <Track>
                      <BarButton type="button">
                        <ThumbIcon turn={90} />
                      </BarButton>
                    </Track>
                    <BarButton type="button">
                      <ChevronIcon turn={180} />
                    </BarButton>
                  </Bar>
                  <HorizontalBar />
                  <Corner />
                </UpperPane>
                <LowerPane>
                  <HandleRow>
                    <FlatHandle />
                  </HandleRow>
                  <Tabs>
                    <Tab type="button" $active>
                      工料机显示
                    </Tab>
                    <TabEdge />
                    {tabs.map((tab) => (
                      <Tab key={tab} type="button">
                        {tab}
                      </Tab>
                    ))}
                  </Tabs>
                  <LowerRow>
                    <DetailGrid>
                      <DetailTable />
                      <HorizontalBar as={DetailBar} />
                    </DetailGrid>
                    <Actions>
                      <ButtonGrid>
                        <XpButton type="button">插入</XpButton>
                        <XpButton type="button">添加</XpButton>
                        <XpButton type="button">删除</XpButton>
                        <XpButton type="button">查询</XpButton>
                        <XpButton type="button" $wide>补充</XpButton>
                        <XpButton type="button" $wide>材料价格查询</XpButton>
                      </ButtonGrid>
                      <Filter>
                        <legend>筛选条件</legend>
                        {filters.map((name) => (
                          <Radio key={name}>
                            <input type="radio" name="filter" defaultChecked={name === "所有"} />
                            {name}
                          </Radio>
                        ))}
                      </Filter>
                    </Actions>
                  </LowerRow>
                </LowerPane>
              </Panes>
            </Work>
            <StatusBar>
              <StatusItem>
                <span>
                  <Mixed text="规范(2013-广东)" />
                </span>
              </StatusItem>
              <StatusItem>
                <span>
                  <Mixed text="定额库: 广东省建筑与装饰工程综合定额(2010)" />
                </span>
              </StatusItem>
              <StatusItem>
                <span>
                  <Mixed text="定额专业: 建筑工程" />
                </span>
                <GripIcon />
              </StatusItem>
            </StatusBar>
          </AppWindow>
          <TaskStrip />
        </LeftSide>

        <Browser>
          <BrowserTabs>
            <BrowserTab>
              航
              <PlainButton type="button" aria-label="关闭">
                <CrossIcon />
              </PlainButton>
            </BrowserTab>
            <BrowserTab $active>
              <SiteIcon />
              <TabTitle>
                <Mixed text="专业造价问题答疑平台-广联达服" />
              </TabTitle>
              <PlainButton type="button" aria-label="关闭">
                <CrossIcon />
              </PlainButton>
            </BrowserTab>
            <NewTab>
              <PlainButton type="button" aria-label="新建">
                <PlusIcon />
              </PlainButton>
            </NewTab>
            <TabsMenu>
              <TabsMenuIcon />
            </TabsMenu>
          </BrowserTabs>
          <Page>
            <ScrolledRow>
              <QuestionItem question={{ title: "山东03定额中内墙装饰脚手架工程量计", tag: "装饰造价" }} />
            </ScrolledRow>
            {questions.map((question) => (
              <QuestionItem key={question.title} question={question} />
            ))}
            <Question $open>
              <QuestionIcon />
              <QuestionLine>
                <QuestionLink href="#">
                  <Mixed text="广东 地下室车库装修“2厚金钢砂耐磨层”列哪条清单套哪条定额?" size={12} />
                </QuestionLink>
              </QuestionLine>
            </Question>
            <ScoreRow>
              <ScoreTag tag="土建算量GCL2013" />
            </ScoreRow>
            <Card>
              <Meta>
                <span>
                  提问者：
                  <a href="#">
                    <Mixed text="@瘟琳宾儿" />
                  </a>
                </span>
                <span>|</span>
                <span>
                  <Mixed text="悬赏分：0分" />
                </span>
                <span>|</span>
                <span>
                  <Mixed text="回答次数：0次" />
                </span>
              </Meta>
              <Composer>
                <InsertImage type="button">
                  <PictureIcon />
                  插入图片
                </InsertImage>
                <Answer
                  aria-label="回答"
                  placeholder="回答即可得2分贡献分，回答被采纳获得系统赠送20贡献分及提问者悬赏分..."
                />
              </Composer>
              <CardTitle>回答</CardTitle>
            </Card>
            <QuestionItem question={{ title: "过滤器套什么清单", tag: "预算书" }} />
          </Page>
          <Notice>
            <NoticeText>
              <span>
                距离第一名还有<b>5</b>个问
              </span>
              <span>题!</span>
            </NoticeText>
            <NoticeTask>
              <NoteIcon />
              我的答疑任务
            </NoticeTask>
          </Notice>
        </Browser>

        <ArrowLayer viewBox="0 0 1373 710" preserveAspectRatio="none">
          {arrows.map((points, i) => (
            <Arrow key={i} points={points} />
          ))}
        </ArrowLayer>
      </Desktop>
    </>
  );
};

export default App;
